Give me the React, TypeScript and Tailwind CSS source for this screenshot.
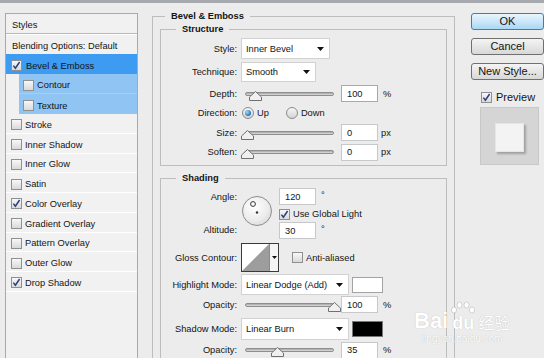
import React from 'react'

function CheckBox({ checked = false }: { checked?: boolean }) {
  return (
    <span className="flex h-[11px] w-[11px] flex-none items-center justify-center border border-[#8f9090] bg-linear-to-b from-[#f8f8f8] to-[#d9d9d9]">
      {checked && (
        <svg width="9" height="9" viewBox="0 0 9 9">
          <path d="M1.4 4.6 L3.4 7.2 L7.6 1" fill="none" stroke="#29407c" strokeWidth="1.5" />
        </svg>
      )}
    </span>
  )
}

function Radio({ on = false }: { on?: boolean }) {
  return (
    <span className="flex h-[12px] w-[12px] flex-none items-center justify-center rounded-full border border-[#8b8b8b] bg-linear-to-b from-[#f6f6f6] to-[#d4d4d4]">
      {on && <span className="h-[6px] w-[6px] rounded-full bg-[radial-gradient(circle_at_35%_35%,#9bdcff,#1b6bbd_75%)]" />}
    </span>
  )
}

function Arrow() {
  return (
    <svg width="7" height="4" viewBox="0 0 7 4" className="flex-none">
      <path d="M0 0 H7 L3.5 4 Z" fill="#111" />
    </svg>
  )
}

function Select({ value, className }: { value: string; className: string }) {
  return (
    <div className={`flex items-center justify-between border border-[#d2d2d2] bg-white pl-[4px] pr-[5px] ${className}`}>
      <span>{value}</span>
      <Arrow />
    </div>
  )
}

function Field({ value, focus = false, className = 'ml-[7px]' }: { value: string; focus?: boolean; className?: string }) {
  return (
    <div
      className={`flex h-[17px] w-[37px] flex-none items-center border bg-white pl-[5px] ${focus ? 'border-[#86b1dc]' : 'border-[#c6c8cc]'} ${className}`}
    >
      {value}
    </div>
  )
}

function Slider({ at }: { at: number }) {
  return (
    <div className="relative ml-[4px] h-[4px] w-[89px] flex-none rounded-full border border-[#8e8e8e] bg-linear-to-b from-[#a4a4a4] to-[#e0e0e0]">
      <svg className="absolute top-[-2px]" style={{ left: at - 6 }} width="13" height="10" viewBox="0 0 13 10">
        <path d="M6.5 0.5 L12.5 6 L12.5 9.5 L0.5 9.5 L0.5 6 Z" fill="#f0f0f0" stroke="#707070" />
      </svg>
    </div>
  )
}

function Row({ label, className, children }: { label: string; className: string; children: React.ReactNode }) {
  return (
    <div className={`flex items-center ${className}`}>
      <span className="w-[76px] flex-none text-right">{label}</span>
      <div className="ml-[4px] flex items-center">{children}</div>
    </div>
  )
}

const lowerStyles: [string, boolean][] = [
  ['Stroke', false],
  ['Inner Shadow', false],
  ['Inner Glow', false],
  ['Satin', false],
  ['Color Overlay', true],
  ['Gradient Overlay', false],
  ['Pattern Overlay', false],
  ['Outer Glow', false],
  ['Drop Shadow', true],
]

export default function App() {
  return (
    <div className="relative flex h-[358px] w-[544px] flex-col overflow-hidden bg-[#ececec] font-['Liberation_Sans',Arial,sans-serif] text-[9.3px] leading-[12px] text-[#141414]">
      <div className="h-[3px] flex-none bg-[#a6a9ad]" />
      <div className="flex min-h-0 flex-1">
        {/* styles list */}
        <div className="ml-[5px] mt-[10px] w-[133px] flex-none border border-b-0 border-[#a9a9a9] bg-[#f1f1f1]">
          <div className="flex h-[20px] items-center border-b border-[#b8b8b8] pl-[6px] pt-[3px]">Styles</div>
          <div className="flex h-[20px] items-center border-t border-white pl-[6px] pt-[3px]">Blending Options: Default</div>
          <div className="flex h-[20px] items-center bg-[#3d9bf2] pl-[5px] pt-[3px]">
            <CheckBox checked />
            <span className="ml-[4px]">Bevel &amp; Emboss</span>
          </div>
          <div className="ml-[13px] flex h-[20px] items-center border-b border-[#a6cff6] bg-[#8fc4f3] pl-[4px] pt-[3px]">
            <CheckBox />
            <span className="ml-[3px]">Contour</span>
          </div>
          <div className="ml-[13px] flex h-[20px] items-center bg-[#8fc4f3] pl-[4px] pt-[3px]">
            <CheckBox />
            <span className="ml-[3px]">Texture</span>
          </div>
          {lowerStyles.map(([name, on]) => (
            <div key={name} className="flex h-[19.75px] items-center border-b border-white pl-[5px] pt-[3px]">
              <CheckBox checked={on} />
              <span className="ml-[3px]">{name}</span>
            </div>
          ))}
        </div>

        {/* bevel & emboss */}
        <fieldset className="ml-[14px] mt-[7px] w-[303px] flex-none self-start border border-[#bdbdbd] px-[7px] pb-[12px]">
          <legend className="ml-[5px] px-[6px] font-bold leading-[12px]">Bevel &amp; Emboss</legend>

          <fieldset className="mt-[1px] border border-[#bdbdbd] pb-[3px]">
            <legend className="ml-[15px] px-[6px] font-bold leading-[12px]">Structure</legend>
            <div className="pt-[2px]">
              <Row label="Style:" className="h-[23px]">
                <Select value="Inner Bevel" className="h-[21px] w-[89px]" />
              </Row>
              <Row label="Technique:" className="h-[24px]">
                <Select value="Smooth" className="h-[20px] w-[75px]" />
              </Row>
              <Row label="Depth:" className="h-[19px]">
                <Slider at={9} />
                <Field value="100" focus />
                <span className="ml-[5px]">%</span>
              </Row>
              <Row label="Direction:" className="h-[20px]">
                <span className="ml-[1px] flex items-center">
                  <Radio on />
                  <span className="ml-[3px]">Up</span>
                </span>
                <span className="ml-[17px] flex items-center">
                  <Radio />
                  <span className="ml-[3px]">Down</span>
                </span>
              </Row>
              <Row label="Size:" className="h-[19px]">
                <Slider at={1} />
                <Field value="0" />
                <span className="ml-[3px]">px</span>
              </Row>
              <Row label="Soften:" className="h-[20px]">
                <Slider at={1} />
                <Field value="0" />
                <span className="ml-[3px]">px</span>
              </Row>
            </div>
          </fieldset>

          <fieldset className="mt-[6px] border border-[#bdbdbd]">
            <legend className="ml-[15px] px-[6px] font-bold leading-[12px]">Shading</legend>
            <div className="flex h-[57px]">
              <div className="flex w-[76px] flex-none flex-col items-end pt-[7px]">
                <span>Angle:</span>
                <span className="mt-[21px]">Altitude:</span>
              </div>
              <div className="ml-[5px] mt-[12px] h-[30px] w-[30px] flex-none rounded-full border border-[#8c8c8c] bg-[radial-gradient(circle_at_40%_35%,#ffffff,#ececec_55%,#cdcdcd)]">
                <svg width="28" height="28" viewBox="0 0 28 28">
                  <circle cx="10" cy="7" r="2.4" fill="#fff" stroke="#333" strokeWidth="1" />
                  <circle cx="14" cy="15.5" r="1.2" fill="#333" />
                </svg>
              </div>
              <div className="ml-[7px] flex flex-col pt-[4px]">
                <div className="flex items-start">
                  <Field value="120" className="ml-0" />
                  <span className="ml-[5px] mt-[1px]">°</span>
                </div>
                <div className="mt-[2px] flex h-[14px] items-center">
                  <CheckBox checked />
                  <span className="ml-[3px]">Use Global Light</span>
                </div>
                <div className="mt-[1px] flex items-start">
                  <Field value="30" className="ml-0" />
                  <span className="ml-[5px] mt-[1px]">°</span>
                </div>
              </div>
            </div>

            <Row label="Gloss Contour:" className="h-[33px]">
              <div className="flex h-[29px] w-[38px] border border-[#3a3a3a] bg-white">
                <svg width="27" height="27" viewBox="0 0 27 27" className="flex-none">
                  <path d="M0 27 L27 0 L27 27 Z" fill="#9d9d9d" />
                </svg>
                <div className="flex flex-1 items-center justify-center border-l border-[#8a8a8a] bg-[#f4f4f4]">
                  <svg width="5" height="3" viewBox="0 0 5 3">
                    <path d="M0 0 H5 L2.5 3 Z" fill="#111" />
                  </svg>
                </div>
              </div>
              <span className="ml-[13px] flex items-center">
                <CheckBox />
                <span className="ml-[3px]">Anti-aliased</span>
              </span>
            </Row>
            <Row label="Highlight Mode:" className="h-[21px]">
              <Select value="Linear Dodge (Add)" className="h-[21px] w-[108px]" />
              <div className="ml-[3px] h-[16px] w-[31px] border border-[#a3a3a3] bg-white" />
            </Row>
            <Row label="Opacity:" className="h-[19px]">
              <Slider at={88} />
              <Field value="100" />
              <span className="ml-[5px]">%</span>
            </Row>
            <Row label="Shadow Mode:" className="mt-[4px] h-[22px]">
              <Select value="Linear Burn" className="h-[22px] w-[108px]" />
              <div className="ml-[3px] h-[16px] w-[31px] border border-[#777] bg-black" />
            </Row>
            <Row label="Opacity:" className="h-[20px]">
              <Slider at={31} />
              <Field value="35" />
              <span className="ml-[5px]">%</span>
            </Row>
          </fieldset>
        </fieldset>

        {/* buttons & preview */}
        <div className="ml-[16px] mt-[10px] flex w-[73px] flex-none flex-col text-[11px] leading-[13px]">
          <button className="h-[17px] rounded-[3px] border border-[#3c7fb1] bg-linear-to-b from-[#e9f5fd] to-[#a9d8f3]">OK</button>
          <button className="mt-[8px] h-[17px] rounded-[3px] border border-[#707070] bg-linear-to-b from-[#f4f4f4] to-[#d8d8d8]">Cancel</button>
          <button className="mt-[8px] h-[17px] rounded-[3px] border border-[#707070] bg-linear-to-b from-[#f4f4f4] to-[#d8d8d8]">New Style...</button>
          <div className="ml-[10px] mt-[11px] flex h-[12px] items-center">
            <CheckBox checked />
            <span className="ml-[4px]">Preview</span>
          </div>
          <div className="ml-[9px] mt-[4px] flex h-[58px] w-[59px] items-center justify-center border border-[#c8c8c8] bg-[#d5d5d5]">
            <div className="mt-[3px] h-[29px] w-[29px] border border-[#e6e6e6] bg-[#f3f3f3] shadow-[2px_2px_2px_rgba(0,0,0,0.25)]" />
          </div>
        </div>
      </div>

      {/* watermark */}
      <div className="pointer-events-none absolute left-[414px] top-[301px] flex flex-col items-center text-white [text-shadow:0_0_1px_rgba(0,0,0,0.25)]">
        <div className="flex items-end">
          <span className="text-[22px] font-bold leading-[24px]">Bai</span>
          <span className="relative ml-[2px] flex flex-col items-center">
            <svg width="26" height="14" viewBox="0 0 26 14" className="mb-[-2px]">
              <g fill="#fff" stroke="rgba(0,0,0,0.15)">
                <ellipse cx="4" cy="9" rx="2.5" ry="3" />
                <ellipse cx="9.5" cy="4" rx="2.5" ry="3" />
                <ellipse cx="16.5" cy="4" rx="2.5" ry="3" />
                <ellipse cx="22" cy="9" rx="2.5" ry="3" />
              </g>
            </svg>
            <span className="text-[18px] font-bold leading-[20px]">du</span>
          </span>
          <span className="ml-[2px] font-['Noto_Sans_CJK_SC',sans-serif] text-[16px] leading-[22px]">经验</span>
        </div>
        <span className="text-[10px] leading-[12px]">jingyan.baidu.com</span>
      </div>
    </div>
  )
}
